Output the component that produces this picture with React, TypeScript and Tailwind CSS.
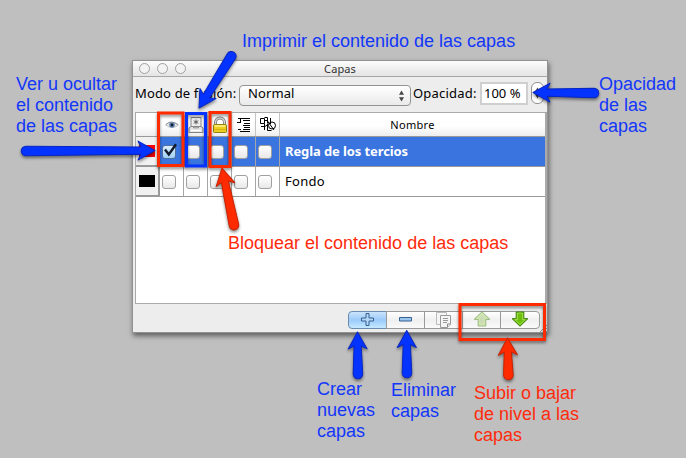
import React from "react";

const UI = "font-['Noto_Sans',sans-serif]";

type ArrowProps = { from: [number, number]; to: [number, number]; red?: boolean; head?: number };

// Tapered marker arrow with a rounded tail, drawn along the x axis and rotated into place.
function Arrow({ from, to, red, head = 16 }: ArrowProps) {
  const dx = to[0] - from[0];
  const dy = to[1] - from[1];
  const len = Math.hypot(dx, dy);
  const angle = (Math.atan2(dy, dx) * 180) / Math.PI;
  const d = `M${len} 0L${len - head - 1} -9.5L${len - head + 2} -3.6L5 -4.8A4.8 4.8 0 0 0 5 4.8L${len - head + 2} 3.6L${len - head - 1} 9.5Z`;
  return (
    <path
      d={d}
      transform={`translate(${from[0]} ${from[1]}) rotate(${angle})`}
      fill={red ? "#ff2b00" : "#0433ff"}
      stroke={red ? "#c92200" : "#0826c4"}
      strokeWidth="1"
      strokeLinejoin="round"
    />
  );
}

function Check({ checked }: { checked?: boolean }) {
  return (
    <span
      className={`relative block h-[14px] w-[14px] rounded-[3px] border ${
        checked
          ? "border-[#51709c] bg-linear-to-b from-[#d9ecfc] to-[#9fd0f5]"
          : "border-[#a0a0a0] bg-linear-to-b from-white to-[#e8e8e8]"
      }`}
    >
      {checked && (
        <svg className="absolute -top-[3px] left-0" width="15" height="14" viewBox="0 0 15 14">
          <path d="M2 6.5L5.8 11.5L13 1.2" fill="none" stroke="#101a2c" strokeWidth="2.4" />
        </svg>
      )}
    </span>
  );
}

function Eye() {
  return (
    <svg width="14" height="10" viewBox="0 0 14 10">
      <path d="M.5 5Q6-.5 13.5 5Q7 10 .5 5Z" fill="#e5e8eb" stroke="#b4b8bc" strokeWidth=".8" />
      <path d="M1 4.5Q6-.5 13 4.5" fill="none" stroke="#8c9298" />
      <circle cx="7" cy="5" r="2.8" fill="#5e81aa" />
      <circle cx="7" cy="5" r="1.4" fill="#132031" />
    </svg>
  );
}

function Printer() {
  return (
    <svg width="16" height="16" viewBox="0 0 16 16" fill="none" stroke="#858585">
      <path d="M3 .5H13V9.5H3Z" fill="#eee" />
      <path d="M3 9.5H5.5V10.8H10.5V9.5H13L15 11V15.5H1V11Z" fill="#e4e4e4" />
      <path d="M8 2.5V7.5M5.7 3.7L10.3 6.3M10.3 3.7L5.7 6.3" stroke="#555" strokeWidth=".9" />
      <path d="M3 13.5H13" stroke="#fff" />
    </svg>
  );
}

function Lock() {
  return (
    <svg width="16" height="18" viewBox="0 0 16 18">
      <path d="M3.5 9V6.5A4.5 4.5 0 0 1 12.5 6.5V9" fill="none" stroke="#777" strokeWidth="3" />
      <path d="M3.5 9V6.5A4.5 4.5 0 0 1 12.5 6.5V9" fill="none" stroke="#d6d6d6" strokeWidth="1.4" />
      <rect x="1.5" y="8.5" width="13" height="8" rx="1" fill="#edcf20" stroke="#94810f" />
      <path d="M2.5 10H13.5" stroke="#fff38b" strokeWidth="1.5" />
      <path d="M2.5 13.5H13.5" stroke="#d7ae13" />
    </svg>
  );
}

function Indent() {
  return (
    <svg width="16" height="16" viewBox="0 0 16 16" fill="none" stroke="#000">
      <path d="M2 1.5H14M7 3.5H14M1 5.5H5M8 6.5H14M7 8.5H14M8 10.5H14M2 12.5H5M7 12.5H14M4 14.5H14M4.5 1.5V5.5" />
    </svg>
  );
}

function Shapes() {
  return (
    <svg width="18" height="17" viewBox="0 0 18 17" fill="none" stroke="#000">
      <path d="M1.5 2.5H5.5V7.5H1.5ZM5.5 1.5H8.5V7.5M5.5 7.5V14M5.5 4.5H8.5M2 10.5H6L9.5 8M8.5 8V14.5H12.5M11.5 2V8M8.5 5L15 14" />
      <circle cx="13" cy="9.5" r="3.5" />
    </svg>
  );
}

function GreenArrow({ down, faded }: { down?: boolean; faded?: boolean }) {
  return (
    <svg width="18" height="16" viewBox="0 0 18 16" className={`-translate-y-px ${down ? "rotate-180" : ""} ${faded ? "opacity-50" : ""}`}>
      <path d="M9 .8L16.8 8.3H12.8V15H5.2V8.3H1.2Z" fill={faded ? "#a3c878" : "#6cc00c"} stroke="#347900" strokeLinejoin="round" />
      <path d="M9 2.5L14.2 7.4H11.7V13.9H6.3V7.4H3.8Z" fill="none" stroke="#b5e565" strokeWidth=".8" />
    </svg>
  );
}

function Copy() {
  return (
    <svg width="17" height="17" viewBox="0 0 17 17" fill="#f5f5f5" stroke="#bbb">
      <path d="M1.5 .5H11.5V12.5H1.5Z" />
      <path d="M5.5 3.5H15.5V12L12.5 15.5H5.5Z" stroke="#999" />
      <path d="M8 6.5H13M8 8.5H13M8 10.5H12" stroke="#999" />
      <path d="M12.5 15V12H15.5" stroke="#888" />
    </svg>
  );
}

function Layer({ name, selected }: { name: string; selected?: boolean }) {
  const cell = "flex w-6 shrink-0 items-center border-r border-[#a6a6a6] pl-[2px]";
  return (
    <div className={`flex h-[30px] border-b border-[#999] ${selected ? "bg-[#3a74df]" : "bg-white"}`}>
      <div className="flex w-6 shrink-0 items-center justify-center border-r-2 border-b border-[#999] bg-[#f1f1f1]">
        <span className={`h-3 w-4 ${selected ? "bg-[#fb0007]" : "bg-black"}`} />
      </div>
      <div className={cell}><Check checked={selected} /></div>
      <div className={cell}><Check /></div>
      <div className={cell}><Check /></div>
      <div className={cell}><Check /></div>
      <div className={cell}><Check /></div>
      <div className={`${UI} flex flex-1 items-center pl-[5px] text-[13px] ${selected ? "font-bold text-white tracking-[-0.1px]" : "text-black tracking-[0.3px]"}`}>
        {name}
      </div>
    </div>
  );
}

function Titlebar() {
  const light = "h-[11px] w-[11px] rounded-full border border-[#a0a0a0] bg-[#f3f3f3]";
  return (
    <div className="relative flex h-4 shrink-0 items-center gap-[7px] border-b border-[#a6a6a6] bg-linear-to-b from-[#fcfcfc] to-[#e4e4e4] pl-[6px]">
      <span className={light} />
      <span className={light} />
      <span className={light} />
      <span className={`${UI} absolute inset-x-0 text-center text-[11px] leading-4 tracking-[0.1px] text-[#333]`}>Capas</span>
    </div>
  );
}

function Stepper() {
  return (
    <svg width="7" height="12" viewBox="0 0 7 12" fill="#444">
      <path d="M3.5 .5L6 4.8H1ZM3.5 11.5L1 7.2H6Z" />
    </svg>
  );
}

function Note({ place, red, children }: { place: string; red?: boolean; children: React.ReactNode }) {
  return (
    <p className={`absolute whitespace-nowrap font-['Liberation_Sans',Arial,sans-serif] text-[18px] leading-[21px] ${red ? "text-[#ff2b0c]" : "text-[#1236fb]"} ${place}`}>
      {children}
    </p>
  );
}

export default function App() {
  const head = "flex w-6 shrink-0 items-center justify-center border-r border-[#c4c4c4]";
  const button = "-ml-px flex h-[18px] items-center justify-center border border-[#999] bg-linear-to-b from-white via-[#f0f0f0] to-[#fafafa]";
  return (
    <main className="relative h-[458px] w-[686px] overflow-hidden bg-[#bfbfbf] pt-[60px] pl-[132px]">
      <section className="flex h-[273px] w-[416px] flex-col border border-[#929292] bg-[#ededed] shadow-[1px_3px_5px_rgba(0,0,0,0.5)]">
        <Titlebar />
        <div className={`${UI} flex h-[35px] shrink-0 items-start text-[13px] text-black`}>
          <span className="mt-[7px] ml-[2px] w-[104px] whitespace-nowrap tracking-[0.15px]">Modo de fusión:</span>
          <div className="mt-2 flex h-[21px] w-[172px] items-center justify-between rounded-[4px] border border-[#939393] bg-linear-to-b from-white to-[#eaeaea] pr-[5px] pl-2">
            <span className="-mt-[3px] tracking-[0.1px]">Normal</span>
            <Stepper />
          </div>
          <span className="mt-[7px] ml-[2px] w-[67px] whitespace-nowrap tracking-[0.2px]">Opacidad:</span>
          <div className="mt-[5px] h-[23px] w-12 border-2 border-[#cfcfcf] bg-white pl-[2px] leading-[19px] whitespace-nowrap">100 %</div>
          <div className="mt-[5px] ml-[3px] flex h-[22px] w-[13px] items-center justify-center rounded-[6px] border border-[#919191] bg-white">
            <Stepper />
          </div>
        </div>
        <div className="ml-[2px] flex h-[192px] shrink-0 flex-col border border-r-2 border-[#aaa] bg-white">
          <div className="flex h-6 shrink-0 border-b border-[#999] bg-linear-to-b from-white from-55% to-[#ededed]">
            <div className={head} />
            <div className={head}><Eye /></div>
            <div className={head}><Printer /></div>
            <div className={head}><Lock /></div>
            <div className={head}><Indent /></div>
            <div className={head}><Shapes /></div>
            <div className={`${UI} flex flex-1 items-center justify-center pt-[2px] text-[11px] tracking-[0.3px] text-black`}>Nombre</div>
          </div>
          <Layer name="Regla de los tercios" selected />
          <Layer name="Fondo" />
        </div>
        <div className="relative flex flex-1 items-start justify-end pt-[7px] pr-[7px]">
          <button className="flex h-[18px] w-[39px] items-center justify-center rounded-l-[4px] border border-[#698bad] bg-linear-to-b from-[#cae4fc] via-[#9bcafa] to-[#c5eaff]">
            <svg className="-translate-y-px" width="13" height="13" viewBox="0 0 13 13"><path d="M5 .5H8V5H12.5V8H8V12.5H5V8H.5V5H5Z" fill="#b3d7f6" stroke="#356193" /></svg>
          </button>
          <button className={`${button} w-[39px]`}>
            <svg className="-translate-y-px" width="13" height="5" viewBox="0 0 13 5"><path d="M.5 .5H12.5V4H.5Z" fill="#9bc6ed" stroke="#356193" /></svg>
          </button>
          <button className={`${button} w-[39px]`}><Copy /></button>
          <button className={`${button} w-[39px]`}><GreenArrow faded /></button>
          <button className={`${button} w-10 rounded-r-[4px]`}><GreenArrow down /></button>
          <svg className="absolute right-0 bottom-0" width="8" height="8" viewBox="0 0 8 8" stroke="#999"><path d="M1 8L8 1M4 8L8 4M7 8L8 7" /></svg>
        </div>
      </section>

      <svg className="absolute inset-0 drop-shadow-[0_2px_1.5px_rgba(0,0,0,0.45)]" width="686" height="458" viewBox="0 0 686 458">
        <g fill="none" strokeWidth="3">
          <rect x="158.5" y="113" width="24.5" height="52.5" stroke="#ff2b00" />
          <rect x="186.5" y="113.5" width="19" height="52.5" stroke="#0433ff" />
          <rect x="210" y="112.5" width="20" height="54" stroke="#ff2b00" />
          <rect x="460" y="304.5" width="84.5" height="35" stroke="#ff2b00" />
        </g>
        <Arrow from={[21, 151]} to={[155, 150.5]} />
        <Arrow from={[234, 52]} to={[199, 108]} />
        <Arrow from={[599, 93]} to={[533, 92.5]} />
        <Arrow from={[235, 230]} to={[222, 168]} red />
        <Arrow from={[358, 379]} to={[357.5, 332]} />
        <Arrow from={[407, 378]} to={[406.7, 330.5]} />
        <Arrow from={[508.5, 380]} to={[507.5, 338]} red />
      </svg>

      <Note place="left-[242px] top-[31px]">Imprimir el contenido de las capas</Note>
      <Note place="left-[16px] top-[74px]">Ver u ocultar<br />el contenido<br />de las capas</Note>
      <Note place="left-[599px] top-[74px]">Opacidad<br />de las<br />capas</Note>
      <Note red place="left-[228px] top-[233px]">Bloquear el contenido de las capas</Note>
      <Note place="left-[317px] top-[379px]">Crear<br />nuevas<br />capas</Note>
      <Note place="left-[391px] top-[380px]">Eliminar<br />capas</Note>
      <Note red place="left-[474px] top-[383px]">Subir o bajar<br />de nivel a las<br />capas</Note>
    </main>
  );
}
